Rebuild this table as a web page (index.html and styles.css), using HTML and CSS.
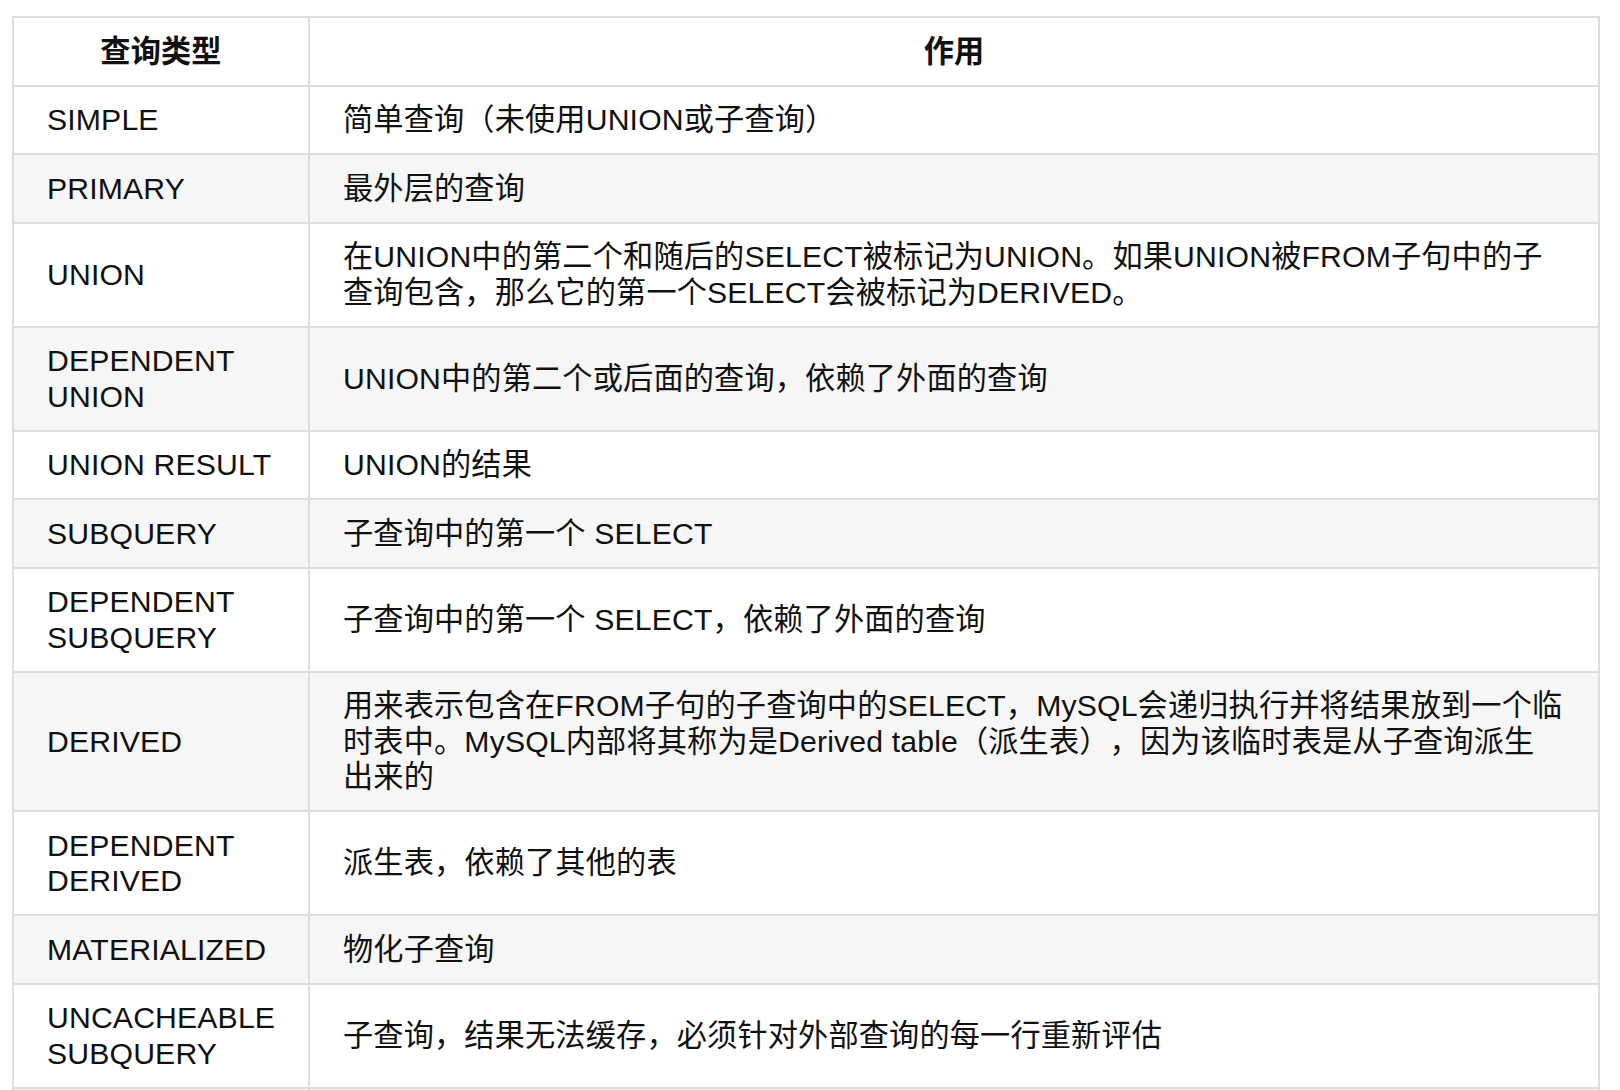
FILE: index.html
```html
<!DOCTYPE html>
<html lang="zh-CN">
<head>
<meta charset="utf-8">
<title>select_type</title>
<link rel="stylesheet" href="styles.css">
</head>
<body>
<table class="types">
  <colgroup>
    <col class="col-type">
    <col class="col-desc">
  </colgroup>
  <thead>
    <tr><th>查询类型</th><th>作用</th></tr>
  </thead>
  <tbody>
    <tr><td>SIMPLE</td><td>简单查询（未使用UNION或子查询）</td></tr>
    <tr><td>PRIMARY</td><td>最外层的查询</td></tr>
    <tr><td>UNION</td><td>在UNION中的第二个和随后的SELECT被标记为UNION。如果UNION被FROM子句中的子<br>查询包含，那么它的第一个SELECT会被标记为DERIVED。</td></tr>
    <tr><td>DEPENDENT<br>UNION</td><td>UNION中的第二个或后面的查询，依赖了外面的查询</td></tr>
    <tr><td>UNION RESULT</td><td>UNION的结果</td></tr>
    <tr><td>SUBQUERY</td><td>子查询中的第一个 SELECT</td></tr>
    <tr><td>DEPENDENT<br>SUBQUERY</td><td>子查询中的第一个 SELECT，依赖了外面的查询</td></tr>
    <tr><td>DERIVED</td><td>用来表示包含在FROM子句的子查询中的SELECT，MySQL会递归执行并将结果放到一个临<br>时表中。MySQL内部将其称为是Derived table（派生表），因为该临时表是从子查询派生<br>出来的</td></tr>
    <tr><td>DEPENDENT<br>DERIVED</td><td>派生表，依赖了其他的表</td></tr>
    <tr><td>MATERIALIZED</td><td>物化子查询</td></tr>
    <tr><td>UNCACHEABLE<br>SUBQUERY</td><td>子查询，结果无法缓存，必须针对外部查询的每一行重新评估</td></tr>
    <tr><td>UNCACHEABLE<br>UNION</td><td>UNION中的第二个或随后的查询，属于不可缓存的子查询</td></tr>
  </tbody>
</table>
</body>
</html>
```
FILE: styles.css
```css
html, body {
  background: #ffffff;
}

body {
  margin: 16px 12px;
  font-family: "Liberation Sans", Arial, "Noto Sans CJK SC", sans-serif;
  font-size: 30.2px;
  line-height: 35.5px;
  color: #111111;
  text-spacing-trim: space-all;
}

.types {
  width: 1588px;
  table-layout: fixed;
  border-collapse: separate;
  border-spacing: 0;
  border-top: 2px solid #dddddd;
  border-left: 2px solid #dddddd;
}

.col-type {
  width: 296px;
}

.types th,
.types td {
  box-sizing: border-box;
  padding: 15.5px 20px 15.5px 33px;
  border-right: 2px solid #dddddd;
  border-bottom: 2px solid #dddddd;
  vertical-align: middle;
  text-align: left;
  background: #ffffff;
  letter-spacing: 0.15px;
  white-space: nowrap;
}

.types th {
  font-weight: bold;
  text-align: center;
  padding-left: 20px;
}

.types tbody tr:nth-child(2n) td {
  background: #f6f6f6;
}
```
